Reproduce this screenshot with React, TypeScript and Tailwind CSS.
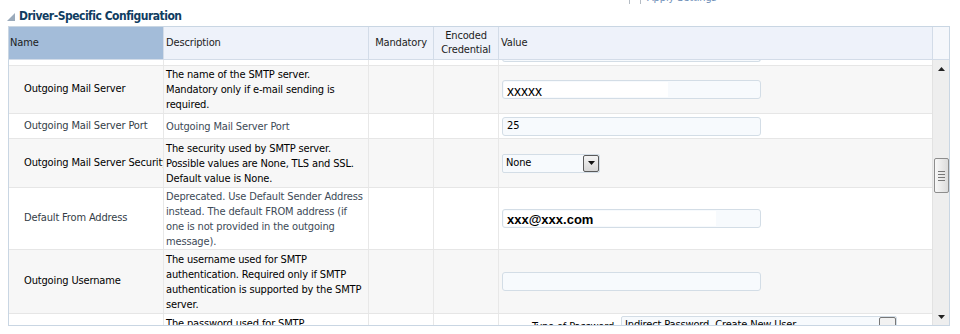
import { ReactNode } from "react";

const COLS = "grid grid-cols-[155px_205px_65px_65px_433px]";

const TextInput = ({ children, white }: { children?: ReactNode; white?: number }) => (
  <div className="relative h-[19px] w-[259px] rounded-[3px] border border-[#d3dde6] bg-[#f7fafd]">
    {white ? (
      <div className="absolute left-[1px] top-[1px] h-[15px] bg-white" style={{ width: white }} />
    ) : null}
    <div className="relative flex h-full items-center px-[4px]">{children}</div>
  </div>
);

const Row = ({
  name,
  desc,
  value,
  h,
  gray,
  muted,
}: {
  name: string;
  desc: string[];
  value: ReactNode;
  h: string;
  gray?: boolean;
  muted?: boolean;
}) => (
  <div className={`${COLS} ${h} border-b border-[#e6e6e6] ${gray ? "bg-[#f7f7f7]" : "bg-white"}`}>
    <div className={`flex items-center overflow-hidden whitespace-nowrap border-r border-[#e8e8e8] pl-[15px] ${muted ? "text-[#333d47]" : "text-black"}`}>
      {name}
    </div>
    <div className={`flex items-center overflow-hidden border-r border-[#e8e8e8] pl-[2px] leading-[15px] ${muted ? "text-[#3d4a57]" : "text-black"}`}>
      <div className="whitespace-nowrap">
        {desc.map((line) => (
          <div key={line}>{line}</div>
        ))}
      </div>
    </div>
    <div className="border-r border-[#e8e8e8]" />
    <div className="border-r border-[#e8e8e8]" />
    <div className="flex items-center pl-[3px]">{value}</div>
  </div>
);

export default function App() {
  return (
    <div className="h-[334px] w-[960px] overflow-hidden bg-white font-['DejaVu_Sans_Condensed','Liberation_Sans',sans-serif] text-[11px] tracking-[-0.15px]">
      {/* clipped control at top */}
      <div className="h-[4px] overflow-hidden">
        <div className="-mt-[10px] ml-[629px] flex items-center gap-[6px] text-[#6f8fb8]">
          <div className="h-[13px] w-[12px] border border-[#b5bcc4] bg-white" />
          <span>Apply Settings</span>
        </div>
      </div>

      {/* section title */}
      <div className="flex h-[22px] items-center pl-[6px] pt-[1px]">
        <svg width="10" height="10" viewBox="0 0 10 10" className="mr-[3px] mt-[2px]">
          <polygon points="9,1 9,9 1,9" fill="#9aaabb" />
        </svg>
        <span className="text-[12px] font-bold tracking-[-0.5px] text-[#0f3c61]">Driver-Specific Configuration</span>
      </div>

      {/* table */}
      <div className="ml-[8px] w-[942px] border border-[#c9d6e3]">
        {/* header */}
        <div className="flex h-[33px] border-b border-[#d3dce8]">
          <div className={`${COLS} bg-[#eef2fa] text-[#1c1c1c]`}>
            <div className="flex items-center border-r border-[#d3dce8] bg-[#a3bcd9] pl-[1px]">Name</div>
            <div className="flex items-center border-r border-[#d3dce8] pl-[2px]">Description</div>
            <div className="flex items-center justify-center border-r border-[#d3dce8]">Mandatory</div>
            <div className="flex items-center justify-center border-r border-[#d3dce8] text-center leading-[14px]">
              Encoded
              <br />
              Credential
            </div>
            <div className="flex items-center pl-[2px]">Value</div>
          </div>
          <div className="w-[17px] border-l border-[#d3dce8] bg-[#f5f7fb]" />
        </div>

        {/* body */}
        <div className="flex h-[265px]">
          <div className="h-full overflow-hidden">
            <div className={`${COLS} h-[6px] border-b border-[#e6e6e6] bg-white`}>
              <div className="border-r border-[#e8e8e8]" />
              <div className="border-r border-[#e8e8e8]" />
              <div className="border-r border-[#e8e8e8]" />
              <div className="border-r border-[#e8e8e8]" />
              <div className="pl-[3px]">
                <div className="-mt-[4px] h-[6px] w-[259px] rounded-b-[3px] border border-t-0 border-[#d3dde6] bg-[#f7fafd]" />
              </div>
            </div>
            <Row
              h="h-[48px]"
              gray
              name="Outgoing Mail Server"
              desc={["The name of the SMTP server.", "Mandatory only if e-mail sending is", "required."]}
              value={
                <TextInput white={164}>
                  <span className="mt-[3px] font-['Liberation_Sans',sans-serif] text-[14px] tracking-normal text-black">xxxxx</span>
                </TextInput>
              }
            />
            <Row
              h="h-[25px]"
              muted
              name="Outgoing Mail Server Port"
              desc={["Outgoing Mail Server Port"]}
              value={
                <TextInput>
                  <span className="text-black">25</span>
                </TextInput>
              }
            />
            <Row
              h="h-[49px]"
              gray
              name="Outgoing Mail Server Security"
              desc={[
                "The security used by SMTP server.",
                "Possible values are None, TLS and SSL.",
                "Default value is None.",
              ]}
              value={
                <div className="flex h-[19px] w-[98px] items-center justify-between rounded-[2px] border border-[#d3dde6] bg-[#f7fafd] pl-[3px]">
                  <span className="text-black">None</span>
                  <div className="flex h-[17px] w-[16px] items-center justify-center rounded-[2px] border border-[#5a5a5a] bg-gradient-to-b from-[#f4f4f4] to-[#d6d6d6]">
                    <svg width="7" height="4" viewBox="0 0 7 4">
                      <polygon points="0,0 7,0 3.5,4" fill="#111" />
                    </svg>
                  </div>
                </div>
              }
            />
            <Row
              h="h-[62px]"
              muted
              name="Default From Address"
              desc={[
                "Deprecated. Use Default Sender Address",
                "instead. The default FROM address (if",
                "one is not provided in the outgoing",
                "message).",
              ]}
              value={
                <TextInput white={212}>
                  <span className="mt-[3px] font-['Liberation_Sans',sans-serif] text-[13px] font-bold tracking-normal text-black">xxx@xxx.com</span>
                </TextInput>
              }
            />
            <Row
              h="h-[64px]"
              gray
              name="Outgoing Username"
              desc={[
                "The username used for SMTP",
                "authentication. Required only if SMTP",
                "authentication is supported by the SMTP",
                "server.",
              ]}
              value={<TextInput />}
            />
            <div className={`${COLS} h-[40px] bg-white`}>
              <div className="border-r border-[#e8e8e8]" />
              <div className="border-r border-[#e8e8e8] pl-[2px] pt-[2px] leading-[15px]">
                The password used for SMTP
              </div>
              <div className="border-r border-[#e8e8e8]" />
              <div className="border-r border-[#e8e8e8]" />
              <div className="flex items-start pt-[2px]">
                <span className="ml-[33px] mt-[3px] w-[84px] whitespace-nowrap">Type of Password</span>
                <div className="ml-[5px] flex h-[19px] w-[276px] items-center justify-between rounded-[2px] border border-[#d3dde6] bg-[#f7fafd] pl-[3px]">
                  <span className="text-black">Indirect Password, Create New User</span>
                  <div className="h-[17px] w-[17px] rounded-[2px] border border-[#777] bg-[#f2f2f2]" />
                </div>
              </div>
            </div>
          </div>

          {/* scrollbar */}
          <div className="flex w-[17px] flex-col items-center border-l border-[#e2e2e2] bg-[#eeeeee]">
            <svg width="7" height="4" viewBox="0 0 7 4" className="mt-[7px]">
              <polygon points="3.5,0 7,4 0,4" fill="#222" />
            </svg>
            <div className="mt-[87px] flex h-[35px] w-[15px] flex-col items-center justify-center gap-[2px] rounded-[2px] border border-[#8d8d8d] bg-gradient-to-r from-[#f8f8f8] to-[#dcdcdc]">
              <div className="h-px w-[7px] bg-[#777]" />
              <div className="h-px w-[7px] bg-[#777]" />
              <div className="h-px w-[7px] bg-[#777]" />
              <div className="h-px w-[7px] bg-[#777]" />
            </div>
            <div className="flex-1" />
            <svg width="7" height="4" viewBox="0 0 7 4" className="mb-[6px]">
              <polygon points="0,0 7,0 3.5,4" fill="#222" />
            </svg>
          </div>
        </div>
      </div>
    </div>
  );
}
